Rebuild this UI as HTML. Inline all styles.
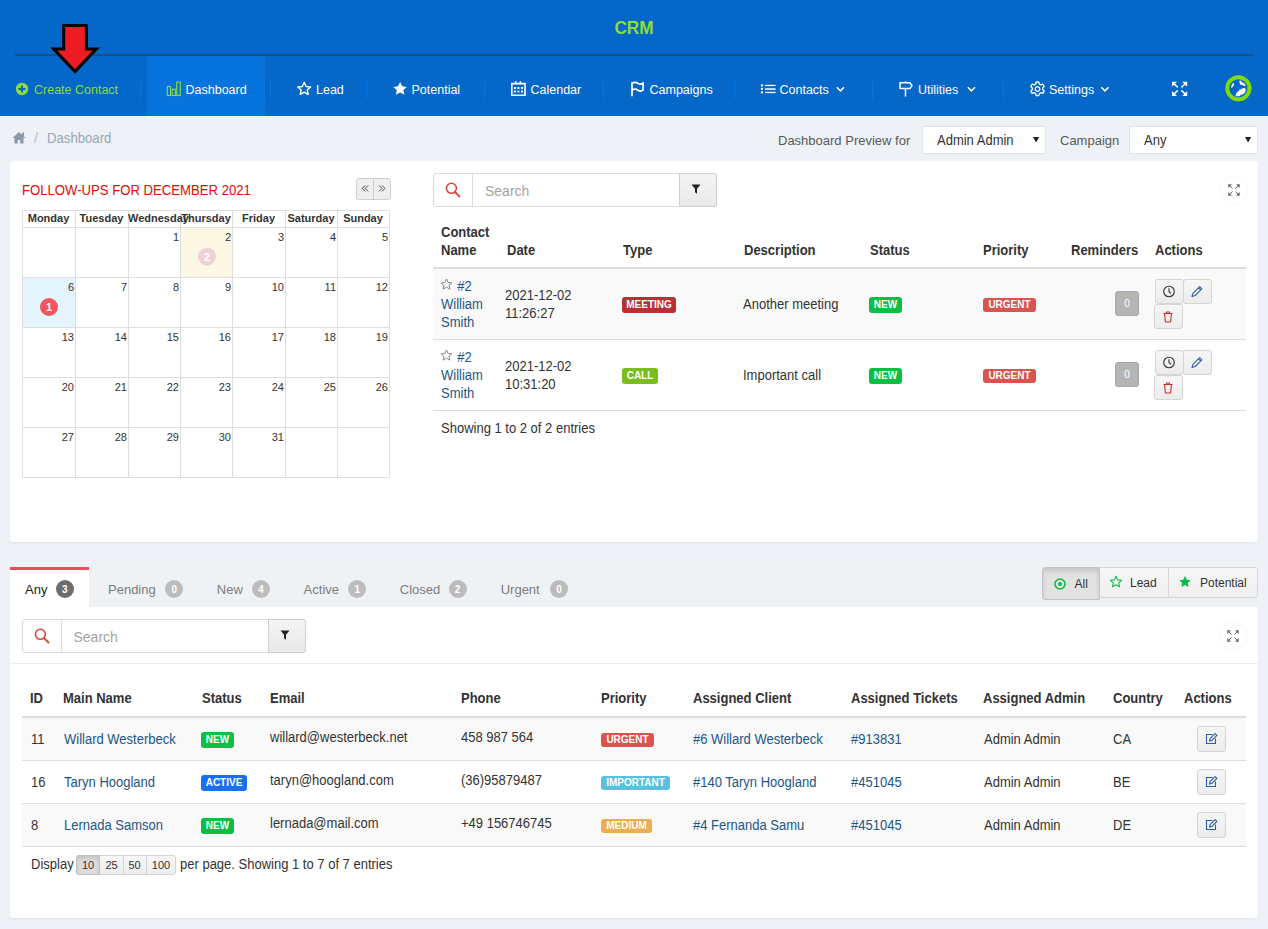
<!DOCTYPE html>
<html><head><meta charset="utf-8">
<style>
*{box-sizing:border-box;margin:0;padding:0}
html,body{width:1268px;height:929px;overflow:hidden}
body{background:#eef1f5;font-family:"Liberation Sans",sans-serif;font-size:13px;color:#333;position:relative}
.abs{position:absolute}
#hdr{position:absolute;left:0;top:0;width:1268px;height:116px;background:#0567c8}
#crm{position:absolute;left:0;top:18px;width:1268px;text-align:center;transform:scaleX(0.955);transform-origin:634px 0;color:#8ddc3a;font-weight:bold;font-size:18px;line-height:20px}
#hline{position:absolute;left:15px;top:54px;width:1238px;height:2px;background:#1d4f80}
.nav{position:absolute;top:60px;height:60px;color:#fff;font-size:13px;line-height:60px;white-space:nowrap}
.nav svg{position:absolute}
.sep{position:absolute;top:81px;width:1px;height:18px;background:#1775d0}
#active{position:absolute;left:147px;top:56px;width:118px;height:60px;background:#0773dc}
.bc{position:absolute;top:130px;font-size:14px;color:#98a6b5;line-height:16px}
.lbl{position:absolute;top:132px;font-size:13px;color:#555;line-height:16px}
.sel{position:absolute;top:126px;height:28px;background:#fff;border:1px solid #e2e5ea;font-size:14px;color:#333;line-height:27px;padding-left:14px}
.sel i{position:absolute;right:7px;top:0;font-style:normal;font-size:10px}
.panel{position:absolute;background:#fff;border-radius:3px;box-shadow:0 1px 2px rgba(0,0,0,.06)}

.t{position:absolute;white-space:nowrap;line-height:18px}
.lnk{color:#22568a}
.th{position:absolute;white-space:nowrap;font-weight:bold;line-height:18px;color:#333}
.badge{position:absolute;color:#fff;font-weight:bold;font-size:10px;line-height:16px;height:16px;border-radius:3px;text-align:center}
.btn{position:absolute;background:linear-gradient(#f6f6f6,#ececec);border:1px solid #d4d4d4;border-radius:3px}
.srch{position:absolute;height:34px;border:1px solid #dcdcdc;border-radius:3px;background:#fff}
</style></head><body>
<div id="hdr"></div>
<div id="crm">CRM</div>
<div id="hline"></div>
<div id="active"></div>


<!-- BREADCRUMB -->
<svg class="abs" style="left:12px;top:131px" width="14" height="13" viewBox="0 0 14 13">
 <path d="M7 1L0.5 7h2v5.5h3.3V9h2.4v3.5h3.3V7h2z" fill="#8a9aa8"/><rect x="10" y="1.5" width="2" height="3.5" fill="#8a9aa8"/>
</svg>
<div class="abs" style="left:34px;top:130px;font-size:14px;line-height:16px;color:#b4c0cc">/</div>
<div class="abs" style="left:47px;top:130px;font-size:14px;line-height:16px;color:#98a6b5;transform:scaleX(0.94);transform-origin:0 0">Dashboard</div>
<div class="abs" style="left:778px;top:133px;font-size:13px;line-height:16px;color:#5a5a5a">Dashboard Preview for</div>
<div class="sel" style="left:922px;width:124px"><span style="display:inline-block;transform:scaleX(.9286);transform-origin:0 0">Admin Admin</span><svg style="position:absolute;left:110px;top:10px" width="7" height="6" viewBox="0 0 7 6"><path d="M0 0h6.2L3.1 5.6z" fill="#222"/></svg></div>
<div class="abs" style="left:1060px;top:133px;font-size:13px;line-height:16px;color:#5a5a5a">Campaign</div>
<div class="sel" style="left:1129px;width:129px"><span style="display:inline-block;transform:scaleX(.9286);transform-origin:0 0">Any</span><svg style="position:absolute;left:115px;top:10px" width="7" height="6" viewBox="0 0 7 6"><path d="M0 0h6.2L3.1 5.6z" fill="#222"/></svg></div>
<!-- PANELS -->
<div class="panel" style="left:10px;top:161px;width:1248px;height:381px"></div>
<div class="abs" style="left:89px;top:567px;width:1169px;height:40px;background:#eff2f5"></div>
<div class="panel" style="left:10px;top:607px;width:1248px;height:311px;border-radius:0 0 3px 3px"></div>
<div class="abs" style="left:10px;top:567px;width:79px;height:41px;background:#fff;border-top:3px solid #f04b5b"></div>
<!-- CALENDAR -->
<div class="abs" style="left:22px;top:182px;font-size:14px;line-height:16px;color:#e00b0b;white-space:nowrap;transform:scaleX(0.938);transform-origin:0 0">FOLLOW-UPS FOR DECEMBER 2021</div>
<div class="abs" style="left:356px;top:178px;width:35px;height:22px;border:1px solid #cfcfcf;border-radius:3px;background:#efefef"></div>
<div class="abs" style="left:373px;top:178px;width:1px;height:22px;background:#cfcfcf"></div>
<svg class="abs" style="left:356px;top:178px" width="36" height="22" viewBox="356 178 36 22"><path d="M365.2 185.4l-3 3 3 3M368.2 185.4l-3 3 3 3M379 185.4l3 3-3 3M382 185.4l3 3-3 3" fill="none" stroke="#444" stroke-width="0.95"/></svg>

<div class="abs" style="left:180px;top:227px;width:52px;height:50px;background:#fcf8e3"></div>
<div class="abs" style="left:22px;top:277px;width:53px;height:50px;background:#e3f4fc"></div>
<svg class="abs" style="left:0;top:0" width="400" height="490"><g fill="#dedede"><rect x="22" y="210" width="1" height="268"/><rect x="75" y="210" width="1" height="268"/><rect x="128" y="210" width="1" height="268"/><rect x="180" y="210" width="1" height="268"/><rect x="232" y="210" width="1" height="268"/><rect x="285" y="210" width="1" height="268"/><rect x="337" y="210" width="1" height="268"/><rect x="389" y="210" width="1" height="268"/><rect x="22" y="210" width="368" height="1"/><rect x="22" y="227" width="368" height="1"/><rect x="22" y="277" width="368" height="1"/><rect x="22" y="327" width="368" height="1"/><rect x="22" y="377" width="368" height="1"/><rect x="22" y="427" width="368" height="1"/><rect x="22" y="477" width="368" height="1"/></g><circle cx="49" cy="307" r="9" fill="#f05560"/><circle cx="207" cy="256.7" r="9" fill="#efd1d7"/></svg>
<div class="abs" style="left:22px;top:212px;width:53px;text-align:center;font-weight:bold;font-size:11px;line-height:12px;color:#333;white-space:nowrap">Monday</div>
<div class="abs" style="left:75px;top:212px;width:53px;text-align:center;font-weight:bold;font-size:11px;line-height:12px;color:#333;white-space:nowrap">Tuesday</div>
<div class="abs" style="left:128px;top:212px;width:52px;text-align:center;font-weight:bold;font-size:11px;line-height:12px;color:#333;white-space:nowrap">Wednesday</div>
<div class="abs" style="left:180px;top:212px;width:52px;text-align:center;font-weight:bold;font-size:11px;line-height:12px;color:#333;white-space:nowrap">Thursday</div>
<div class="abs" style="left:232px;top:212px;width:53px;text-align:center;font-weight:bold;font-size:11px;line-height:12px;color:#333;white-space:nowrap">Friday</div>
<div class="abs" style="left:285px;top:212px;width:52px;text-align:center;font-weight:bold;font-size:11px;line-height:12px;color:#333;white-space:nowrap">Saturday</div>
<div class="abs" style="left:337px;top:212px;width:52px;text-align:center;font-weight:bold;font-size:11px;line-height:12px;color:#333;white-space:nowrap">Sunday</div>
<div class="abs" style="right:1089px;top:231px;font-size:11px;line-height:12px;color:#333">1</div>
<div class="abs" style="right:1037px;top:231px;font-size:11px;line-height:12px;color:#333">2</div>
<div class="abs" style="right:984px;top:231px;font-size:11px;line-height:12px;color:#333">3</div>
<div class="abs" style="right:932px;top:231px;font-size:11px;line-height:12px;color:#333">4</div>
<div class="abs" style="right:880px;top:231px;font-size:11px;line-height:12px;color:#333">5</div>
<div class="abs" style="right:1194px;top:281px;font-size:11px;line-height:12px;color:#333">6</div>
<div class="abs" style="right:1141px;top:281px;font-size:11px;line-height:12px;color:#333">7</div>
<div class="abs" style="right:1089px;top:281px;font-size:11px;line-height:12px;color:#333">8</div>
<div class="abs" style="right:1037px;top:281px;font-size:11px;line-height:12px;color:#333">9</div>
<div class="abs" style="right:984px;top:281px;font-size:11px;line-height:12px;color:#333">10</div>
<div class="abs" style="right:932px;top:281px;font-size:11px;line-height:12px;color:#333">11</div>
<div class="abs" style="right:880px;top:281px;font-size:11px;line-height:12px;color:#333">12</div>
<div class="abs" style="right:1194px;top:331px;font-size:11px;line-height:12px;color:#333">13</div>
<div class="abs" style="right:1141px;top:331px;font-size:11px;line-height:12px;color:#333">14</div>
<div class="abs" style="right:1089px;top:331px;font-size:11px;line-height:12px;color:#333">15</div>
<div class="abs" style="right:1037px;top:331px;font-size:11px;line-height:12px;color:#333">16</div>
<div class="abs" style="right:984px;top:331px;font-size:11px;line-height:12px;color:#333">17</div>
<div class="abs" style="right:932px;top:331px;font-size:11px;line-height:12px;color:#333">18</div>
<div class="abs" style="right:880px;top:331px;font-size:11px;line-height:12px;color:#333">19</div>
<div class="abs" style="right:1194px;top:381px;font-size:11px;line-height:12px;color:#333">20</div>
<div class="abs" style="right:1141px;top:381px;font-size:11px;line-height:12px;color:#333">21</div>
<div class="abs" style="right:1089px;top:381px;font-size:11px;line-height:12px;color:#333">22</div>
<div class="abs" style="right:1037px;top:381px;font-size:11px;line-height:12px;color:#333">23</div>
<div class="abs" style="right:984px;top:381px;font-size:11px;line-height:12px;color:#333">24</div>
<div class="abs" style="right:932px;top:381px;font-size:11px;line-height:12px;color:#333">25</div>
<div class="abs" style="right:880px;top:381px;font-size:11px;line-height:12px;color:#333">26</div>
<div class="abs" style="right:1194px;top:431px;font-size:11px;line-height:12px;color:#333">27</div>
<div class="abs" style="right:1141px;top:431px;font-size:11px;line-height:12px;color:#333">28</div>
<div class="abs" style="right:1089px;top:431px;font-size:11px;line-height:12px;color:#333">29</div>
<div class="abs" style="right:1037px;top:431px;font-size:11px;line-height:12px;color:#333">30</div>
<div class="abs" style="right:984px;top:431px;font-size:11px;line-height:12px;color:#333">31</div>
<div class="abs" style="left:40px;top:301px;width:18px;text-align:center;font-size:11px;font-weight:bold;line-height:12px;color:#fff">1</div>
<div class="abs" style="left:198px;top:251px;width:18px;text-align:center;font-size:11px;font-weight:bold;line-height:12px;color:#fff">2</div>
<!-- PANEL1 RIGHT -->
<div class="srch" style="left:433px;top:173px;width:284px"></div>
<div class="abs" style="left:472px;top:173px;width:1px;height:34px;background:#dcdcdc"></div>
<div class="abs" style="left:679px;top:173px;width:38px;height:34px;border:1px solid #d0d0d0;border-radius:0 3px 3px 0;background:linear-gradient(#f4f4f4,#e9e9e9)"></div>
<svg class="abs" style="left:443px;top:180px" width="20" height="20" viewBox="0 0 20 20"><circle cx="8.4" cy="8.3" r="5" fill="none" stroke="#d9473a" stroke-width="1.6"/><path d="M12 12l4.5 4.5" stroke="#d9473a" stroke-width="1.8" stroke-linecap="round"/></svg>
<div class="t" style="left:485px;top:182px;font-size:14px;color:#a3a3a3">Search</div>
<svg class="abs" style="left:690px;top:183px" width="12" height="12" viewBox="0 0 12 12"><path d="M1.5 1.5h9l-3.5 4.2v5l-2-1.5v-3.5z" fill="#222"/></svg>
<svg class="abs" style="left:1219px;top:176px" width="30" height="30" viewBox="0 0 30 30"><circle cx="15" cy="14" r="14" fill="#fff" stroke="#f9f9f9"/><g fill="#666"><path d="M9.3 8.3h3.6l-3.6 3.6zM20.7 8.3h-3.6l3.6 3.6zM9.3 19.7h3.6l-3.6-3.6zM20.7 19.7h-3.6l3.6-3.6z"/></g><g fill="none" stroke="#666" stroke-width="1"><path d="M10.5 9.5l3 3M19.5 9.5l-3 3M10.5 18.5l3-3M19.5 18.5l-3-3"/></g></svg>
<div class="th" style="left:441px;top:223px;font-size:14px;transform:scaleX(.9286);transform-origin:0 0">Contact<br>Name</div>
<div class="th" style="left:506.5px;top:241px;font-size:14px;transform:scaleX(.9286);transform-origin:0 0">Date</div>
<div class="th" style="left:622.5px;top:241px;font-size:14px;transform:scaleX(.9286);transform-origin:0 0">Type</div>
<div class="th" style="left:743.5px;top:241px;font-size:14px;transform:scaleX(.9286);transform-origin:0 0">Description</div>
<div class="th" style="left:870px;top:241px;font-size:14px;transform:scaleX(.9286);transform-origin:0 0">Status</div>
<div class="th" style="left:983px;top:241px;font-size:14px;transform:scaleX(.9286);transform-origin:0 0">Priority</div>
<div class="th" style="left:1071px;top:241px;font-size:14px;transform:scaleX(.9286);transform-origin:0 0">Reminders</div>
<div class="th" style="left:1155px;top:241px;font-size:14px;transform:scaleX(.9286);transform-origin:0 0">Actions</div>
<div class="abs" style="left:433px;top:267px;width:813px;height:2px;background:#ddd"></div>
<div class="abs" style="left:433px;top:269px;width:813px;height:70px;background:#f9f9f9"></div>
<div class="abs" style="left:433px;top:339px;width:813px;height:1px;background:#ddd"></div>
<div class="abs" style="left:433px;top:410px;width:813px;height:1px;background:#ddd"></div>
<svg class="abs" style="left:440px;top:278px" width="13" height="13" viewBox="0 0 13 13"><path d="M6.5 1l1.6 3.5 3.8.4-2.9 2.5.9 3.8-3.4-2-3.4 2 .9-3.8L1.1 4.9l3.8-.4z" fill="none" stroke="#888" stroke-width="1" stroke-linejoin="round"/></svg>
<div class="t lnk" style="left:441px;top:277px;font-size:14px;transform:scaleX(.9286);transform-origin:0 0"><span style="padding-left:17.5px">#2</span><br>William<br>Smith</div>
<div class="t" style="left:505px;top:286px;font-size:14px;transform:scaleX(.9286);transform-origin:0 0;color:#333">2021-12-02<br>11:26:27</div>
<div class="badge" style="left:622px;top:297px;width:54px;background:#b92f33">MEETING</div>
<div class="t" style="left:743px;top:295px;font-size:14px;transform:scaleX(.9286);transform-origin:0 0;color:#333">Another meeting</div>
<div class="badge" style="left:869px;top:297px;width:33px;background:#0bbf45">NEW</div>
<div class="badge" style="left:983px;top:298px;width:53px;height:14px;line-height:14px;background:#d9534f">URGENT</div>
<div class="abs" style="left:1115px;top:291px;width:24px;height:25px;background:#b5b5b5;border:1px solid #a8a8a8;border-radius:3px;color:#fff;font-size:10px;line-height:23px;text-align:center">0</div>
<div class="btn" style="left:1155px;top:279px;width:29px;height:25px"></div>
<div class="btn" style="left:1183px;top:279px;width:29px;height:25px"></div>
<div class="btn" style="left:1154px;top:304px;width:29px;height:25px"></div>
<svg class="abs" style="left:1161px;top:284px" width="16" height="16" viewBox="0 0 16 16"><circle cx="8" cy="7.5" r="5.3" fill="none" stroke="#333" stroke-width="1.1"/><path d="M8 4.3v3.4l2 1.6" fill="none" stroke="#333" stroke-width="1.1"/></svg>
<svg class="abs" style="left:1189px;top:284px" width="16" height="16" viewBox="0 0 16 16"><path d="M3 12.5l1-3.2 6.6-6.6 2.2 2.2-6.6 6.6zM9.5 3.8l2.2 2.2" fill="none" stroke="#2f5ea8" stroke-width="1.1" stroke-linejoin="round"/></svg>
<svg class="abs" style="left:1160px;top:309px" width="16" height="16" viewBox="0 0 16 16"><path d="M4.5 4.5l.9 8.5h5.2l.9-8.5M3.5 4.5h9M6.5 4.5V3h3v1.5" fill="none" stroke="#c9302c" stroke-width="1.1" stroke-linejoin="round"/></svg>
<svg class="abs" style="left:440px;top:349px" width="13" height="13" viewBox="0 0 13 13"><path d="M6.5 1l1.6 3.5 3.8.4-2.9 2.5.9 3.8-3.4-2-3.4 2 .9-3.8L1.1 4.9l3.8-.4z" fill="none" stroke="#888" stroke-width="1" stroke-linejoin="round"/></svg>
<div class="t lnk" style="left:441px;top:348px;font-size:14px;transform:scaleX(.9286);transform-origin:0 0"><span style="padding-left:17.5px">#2</span><br>William<br>Smith</div>
<div class="t" style="left:505px;top:357px;font-size:14px;transform:scaleX(.9286);transform-origin:0 0;color:#333">2021-12-02<br>10:31:20</div>
<div class="badge" style="left:622px;top:368px;width:36px;background:#7cbd1e">CALL</div>
<div class="t" style="left:743px;top:366px;font-size:14px;transform:scaleX(.9286);transform-origin:0 0;color:#333">Important call</div>
<div class="badge" style="left:869px;top:368px;width:33px;background:#0bbf45">NEW</div>
<div class="badge" style="left:983px;top:369px;width:53px;height:14px;line-height:14px;background:#d9534f">URGENT</div>
<div class="abs" style="left:1115px;top:362px;width:24px;height:25px;background:#b5b5b5;border:1px solid #a8a8a8;border-radius:3px;color:#fff;font-size:10px;line-height:23px;text-align:center">0</div>
<div class="btn" style="left:1155px;top:350px;width:29px;height:25px"></div>
<div class="btn" style="left:1183px;top:350px;width:29px;height:25px"></div>
<div class="btn" style="left:1154px;top:375px;width:29px;height:25px"></div>
<svg class="abs" style="left:1161px;top:355px" width="16" height="16" viewBox="0 0 16 16"><circle cx="8" cy="7.5" r="5.3" fill="none" stroke="#333" stroke-width="1.1"/><path d="M8 4.3v3.4l2 1.6" fill="none" stroke="#333" stroke-width="1.1"/></svg>
<svg class="abs" style="left:1189px;top:355px" width="16" height="16" viewBox="0 0 16 16"><path d="M3 12.5l1-3.2 6.6-6.6 2.2 2.2-6.6 6.6zM9.5 3.8l2.2 2.2" fill="none" stroke="#2f5ea8" stroke-width="1.1" stroke-linejoin="round"/></svg>
<svg class="abs" style="left:1160px;top:380px" width="16" height="16" viewBox="0 0 16 16"><path d="M4.5 4.5l.9 8.5h5.2l.9-8.5M3.5 4.5h9M6.5 4.5V3h3v1.5" fill="none" stroke="#c9302c" stroke-width="1.1" stroke-linejoin="round"/></svg>
<div class="t" style="left:441px;top:419px;font-size:14px;transform:scaleX(.9286);transform-origin:0 0;color:#333">Showing 1 to 2 of 2 entries</div>
<!-- PANEL2 -->
<div class="t" style="left:25px;top:581px;font-size:13px;color:#222">Any</div>
<div class="abs" style="left:55.8px;top:580px;width:18px;height:18px;border-radius:9px;background:#6d6d6d;color:#fff;font-size:10px;font-weight:bold;line-height:19px;text-align:center">3</div>
<div class="t" style="left:108px;top:581px;font-size:13px;color:#7d7d7d">Pending</div>
<div class="abs" style="left:165.4px;top:580px;width:18px;height:18px;border-radius:9px;background:#bcbcbc;color:#fff;font-size:10px;font-weight:bold;line-height:19px;text-align:center">0</div>
<div class="t" style="left:216.8px;top:581px;font-size:13px;color:#7d7d7d">New</div>
<div class="abs" style="left:252px;top:580px;width:18px;height:18px;border-radius:9px;background:#bcbcbc;color:#fff;font-size:10px;font-weight:bold;line-height:19px;text-align:center">4</div>
<div class="t" style="left:303.6px;top:581px;font-size:13px;color:#7d7d7d">Active</div>
<div class="abs" style="left:348.2px;top:580px;width:18px;height:18px;border-radius:9px;background:#bcbcbc;color:#fff;font-size:10px;font-weight:bold;line-height:19px;text-align:center">1</div>
<div class="t" style="left:399.8px;top:581px;font-size:13px;color:#7d7d7d">Closed</div>
<div class="abs" style="left:448.5px;top:580px;width:18px;height:18px;border-radius:9px;background:#bcbcbc;color:#fff;font-size:10px;font-weight:bold;line-height:19px;text-align:center">2</div>
<div class="t" style="left:500.7px;top:581px;font-size:13px;color:#7d7d7d">Urgent</div>
<div class="abs" style="left:550px;top:580px;width:18px;height:18px;border-radius:9px;background:#bcbcbc;color:#fff;font-size:10px;font-weight:bold;line-height:19px;text-align:center">0</div>
<div class="abs" style="left:1099px;top:567px;width:159px;height:31px;border:1px solid #d6d6d6;border-radius:0 3px 3px 0;background:linear-gradient(#f7f7f7,#efefef)"></div>
<div class="abs" style="left:1168px;top:568px;width:1px;height:29px;background:#d6d6d6"></div>
<div class="abs" style="left:1042px;top:567px;width:58px;height:33px;border:1px solid #c4c4c4;border-radius:3px 0 0 3px;background:#e2e2e2;box-shadow:inset 0 3px 5px rgba(0,0,0,.13)"></div>
<svg class="abs" style="left:1052px;top:576px" width="16" height="16" viewBox="0 0 16 16"><circle cx="8" cy="8" r="5" fill="none" stroke="#11b84a" stroke-width="1.6"/><circle cx="8" cy="8" r="2" fill="#11b84a"/></svg>
<div class="t" style="left:1074.5px;top:575px;font-size:12px;color:#333">All</div>
<svg class="abs" style="left:1109px;top:575px" width="14" height="14" viewBox="0 0 14 14"><path d="M7 1.3l1.7 3.6 3.9.4-2.9 2.6.8 3.9L7 9.8l-3.5 2 .8-3.9-2.9-2.6 3.9-.4z" fill="none" stroke="#11b84a" stroke-width="1.1" stroke-linejoin="round"/></svg>
<div class="t" style="left:1130px;top:574px;font-size:12px;color:#333">Lead</div>
<svg class="abs" style="left:1178px;top:575px" width="14" height="14" viewBox="0 0 14 14"><path d="M7 1l1.8 3.7 4 .5-3 2.8.8 4L7 10l-3.6 2 .8-4-3-2.8 4-.5z" fill="#11b84a"/></svg>
<div class="t" style="left:1200px;top:574px;font-size:12px;color:#333">Potential</div>
<div class="srch" style="left:22px;top:619px;width:284px;height:34px"></div>
<div class="abs" style="left:61px;top:619px;width:1px;height:34px;background:#dcdcdc"></div>
<div class="abs" style="left:268px;top:619px;width:38px;height:34px;border:1px solid #d0d0d0;border-radius:0 3px 3px 0;background:linear-gradient(#f4f4f4,#e9e9e9)"></div>
<svg class="abs" style="left:32px;top:626px" width="20" height="20" viewBox="0 0 20 20"><circle cx="8.4" cy="8.3" r="5" fill="none" stroke="#d9473a" stroke-width="1.6"/><path d="M12 12l4.5 4.5" stroke="#d9473a" stroke-width="1.8" stroke-linecap="round"/></svg>
<div class="t" style="left:73.5px;top:628px;font-size:14px;color:#a3a3a3">Search</div>
<svg class="abs" style="left:279px;top:629px" width="12" height="12" viewBox="0 0 12 12"><path d="M1.5 1.5h9l-3.5 4.2v5l-2-1.5v-3.5z" fill="#222"/></svg>
<svg class="abs" style="left:1218px;top:622px" width="30" height="30" viewBox="0 0 30 30"><circle cx="15" cy="14" r="14" fill="#fff" stroke="#f9f9f9"/><g fill="#666"><path d="M9.3 8.3h3.6l-3.6 3.6zM20.7 8.3h-3.6l3.6 3.6zM9.3 19.7h3.6l-3.6-3.6zM20.7 19.7h-3.6l3.6-3.6z"/></g><g fill="none" stroke="#666" stroke-width="1"><path d="M10.5 9.5l3 3M19.5 9.5l-3 3M10.5 18.5l3-3M19.5 18.5l-3-3"/></g></svg>
<div class="abs" style="left:10px;top:663px;width:1248px;height:1px;background:#eceef0"></div>
<div class="th" style="left:30px;top:689px;font-size:14px;transform:scaleX(.9286);transform-origin:0 0">ID</div>
<div class="th" style="left:63.3px;top:689px;font-size:14px;transform:scaleX(.9286);transform-origin:0 0">Main Name</div>
<div class="th" style="left:202.4px;top:689px;font-size:14px;transform:scaleX(.9286);transform-origin:0 0">Status</div>
<div class="th" style="left:270.4px;top:689px;font-size:14px;transform:scaleX(.9286);transform-origin:0 0">Email</div>
<div class="th" style="left:461.2px;top:689px;font-size:14px;transform:scaleX(.9286);transform-origin:0 0">Phone</div>
<div class="th" style="left:601.2px;top:689px;font-size:14px;transform:scaleX(.9286);transform-origin:0 0">Priority</div>
<div class="th" style="left:693.1px;top:689px;font-size:14px;transform:scaleX(.9286);transform-origin:0 0">Assigned Client</div>
<div class="th" style="left:850.8px;top:689px;font-size:14px;transform:scaleX(.9286);transform-origin:0 0">Assigned Tickets</div>
<div class="th" style="left:983.3px;top:689px;font-size:14px;transform:scaleX(.9286);transform-origin:0 0">Assigned Admin</div>
<div class="th" style="left:1113.2px;top:689px;font-size:14px;transform:scaleX(.9286);transform-origin:0 0">Country</div>
<div class="th" style="left:1183.9px;top:689px;font-size:14px;transform:scaleX(.9286);transform-origin:0 0">Actions</div>
<div class="abs" style="left:22px;top:716px;width:1224px;height:2px;background:#ddd"></div>
<div class="abs" style="left:22px;top:718px;width:1224px;height:42px;background:#f9f9f9"></div>
<div class="abs" style="left:22px;top:760px;width:1224px;height:1px;background:#ddd"></div>
<div class="t" style="left:30.5px;top:730px;font-size:14px;transform:scaleX(.9286);transform-origin:0 0">11</div>
<div class="t lnk" style="left:63.5px;top:730px;font-size:14px;transform:scaleX(.9286);transform-origin:0 0">Willard Westerbeck</div>
<div class="badge" style="left:201px;top:732px;width:33px;background:#0bbf45">NEW</div>
<div class="t" style="left:270px;top:728px;font-size:14px;transform:scaleX(.9286);transform-origin:0 0">willard@westerbeck.net</div>
<div class="t" style="left:461px;top:728px;font-size:14px;transform:scaleX(.9286);transform-origin:0 0">458 987 564</div>
<div class="badge" style="left:601px;top:733px;width:53px;height:14px;line-height:14px;background:#d9534f">URGENT</div>
<div class="t lnk" style="left:693px;top:730px;font-size:14px;transform:scaleX(.9286);transform-origin:0 0">#6 Willard Westerbeck</div>
<div class="t lnk" style="left:851px;top:730px;font-size:14px;transform:scaleX(.9286);transform-origin:0 0">#913831</div>
<div class="t" style="left:984px;top:730px;font-size:14px;transform:scaleX(.9286);transform-origin:0 0">Admin Admin</div>
<div class="t" style="left:1113px;top:730px;font-size:14px;transform:scaleX(.9286);transform-origin:0 0">CA</div>
<div class="btn" style="left:1197px;top:726px;width:29px;height:26px"></div>
<svg class="abs" style="left:1203px;top:731px" width="16" height="16" viewBox="0 0 16 16"><path d="M9.5 3.5H3.5v9h9v-5" fill="none" stroke="#2f5ea8" stroke-width="1.1"/><path d="M6.5 10l.6-2.4 5-5 1.8 1.8-5 5z" fill="none" stroke="#2f5ea8" stroke-width="1.1" stroke-linejoin="round"/></svg>
<div class="abs" style="left:22px;top:803px;width:1224px;height:1px;background:#ddd"></div>
<div class="t" style="left:30.5px;top:773px;font-size:14px;transform:scaleX(.9286);transform-origin:0 0">16</div>
<div class="t lnk" style="left:63.5px;top:773px;font-size:14px;transform:scaleX(.9286);transform-origin:0 0">Taryn Hoogland</div>
<div class="badge" style="left:201px;top:775px;width:46px;background:#1a6ef5">ACTIVE</div>
<div class="t" style="left:270px;top:771px;font-size:14px;transform:scaleX(.9286);transform-origin:0 0">taryn@hoogland.com</div>
<div class="t" style="left:461px;top:771px;font-size:14px;transform:scaleX(.9286);transform-origin:0 0">(36)95879487</div>
<div class="badge" style="left:601px;top:776px;width:69px;height:14px;line-height:14px;background:#5bc0de">IMPORTANT</div>
<div class="t lnk" style="left:693px;top:773px;font-size:14px;transform:scaleX(.9286);transform-origin:0 0">#140 Taryn Hoogland</div>
<div class="t lnk" style="left:851px;top:773px;font-size:14px;transform:scaleX(.9286);transform-origin:0 0">#451045</div>
<div class="t" style="left:984px;top:773px;font-size:14px;transform:scaleX(.9286);transform-origin:0 0">Admin Admin</div>
<div class="t" style="left:1113px;top:773px;font-size:14px;transform:scaleX(.9286);transform-origin:0 0">BE</div>
<div class="btn" style="left:1197px;top:769px;width:29px;height:26px"></div>
<svg class="abs" style="left:1203px;top:774px" width="16" height="16" viewBox="0 0 16 16"><path d="M9.5 3.5H3.5v9h9v-5" fill="none" stroke="#2f5ea8" stroke-width="1.1"/><path d="M6.5 10l.6-2.4 5-5 1.8 1.8-5 5z" fill="none" stroke="#2f5ea8" stroke-width="1.1" stroke-linejoin="round"/></svg>
<div class="abs" style="left:22px;top:804px;width:1224px;height:42px;background:#f9f9f9"></div>
<div class="abs" style="left:22px;top:846px;width:1224px;height:1px;background:#ddd"></div>
<div class="t" style="left:30.5px;top:816px;font-size:14px;transform:scaleX(.9286);transform-origin:0 0">8</div>
<div class="t lnk" style="left:63.5px;top:816px;font-size:14px;transform:scaleX(.9286);transform-origin:0 0">Lernada Samson</div>
<div class="badge" style="left:201px;top:818px;width:33px;background:#0bbf45">NEW</div>
<div class="t" style="left:270px;top:814px;font-size:14px;transform:scaleX(.9286);transform-origin:0 0">lernada@mail.com</div>
<div class="t" style="left:461px;top:814px;font-size:14px;transform:scaleX(.9286);transform-origin:0 0">+49 156746745</div>
<div class="badge" style="left:601px;top:819px;width:51px;height:14px;line-height:14px;background:#f0ad4e">MEDIUM</div>
<div class="t lnk" style="left:693px;top:816px;font-size:14px;transform:scaleX(.9286);transform-origin:0 0">#4 Fernanda Samu</div>
<div class="t lnk" style="left:851px;top:816px;font-size:14px;transform:scaleX(.9286);transform-origin:0 0">#451045</div>
<div class="t" style="left:984px;top:816px;font-size:14px;transform:scaleX(.9286);transform-origin:0 0">Admin Admin</div>
<div class="t" style="left:1113px;top:816px;font-size:14px;transform:scaleX(.9286);transform-origin:0 0">DE</div>
<div class="btn" style="left:1197px;top:812px;width:29px;height:26px"></div>
<svg class="abs" style="left:1203px;top:817px" width="16" height="16" viewBox="0 0 16 16"><path d="M9.5 3.5H3.5v9h9v-5" fill="none" stroke="#2f5ea8" stroke-width="1.1"/><path d="M6.5 10l.6-2.4 5-5 1.8 1.8-5 5z" fill="none" stroke="#2f5ea8" stroke-width="1.1" stroke-linejoin="round"/></svg>
<div class="t" style="left:30.5px;top:855px;font-size:14px;transform:scaleX(.9286);transform-origin:0 0">Display</div>
<div class="abs" style="left:76px;top:855px;width:100px;height:20px;border:1px solid #d4d4d4;border-radius:3px;background:linear-gradient(#f7f7f7,#ededed)"></div>
<div class="abs" style="left:76px;top:855px;width:24px;height:20px;border:1px solid #c0c0c0;border-radius:3px 0 0 3px;background:#dcdcdc;box-shadow:inset 0 2px 4px rgba(0,0,0,.12)"></div>
<div class="abs" style="left:123px;top:856px;width:1px;height:18px;background:#d4d4d4"></div>
<div class="abs" style="left:146px;top:856px;width:1px;height:18px;background:#d4d4d4"></div>
<div class="t" style="left:76px;top:856px;width:24px;text-align:center;font-size:11px;color:#333">10</div>
<div class="t" style="left:100px;top:856px;width:23px;text-align:center;font-size:11px;color:#333">25</div>
<div class="t" style="left:123px;top:856px;width:23px;text-align:center;font-size:11px;color:#333">50</div>
<div class="t" style="left:146px;top:856px;width:30px;text-align:center;font-size:11px;color:#333">100</div>
<div class="t" style="left:180px;top:855px;font-size:14px;transform:scaleX(.9286);transform-origin:0 0">per page. Showing 1 to 7 of 7 entries</div>
<!-- NAV -->
<svg class="abs" style="left:0;top:56px" width="1268" height="60" viewBox="0 56 1268 60">
 <g fill="#0775e0">
  <rect x="140" y="81" width="1" height="18"/><rect x="270" y="81" width="1" height="18"/><rect x="366" y="81" width="1" height="18"/>
  <rect x="484" y="81" width="1" height="18"/><rect x="603" y="81" width="1" height="18"/><rect x="734" y="81" width="1" height="18"/>
  <rect x="872" y="81" width="1" height="18"/><rect x="1003" y="81" width="1" height="18"/>
 </g>
 <!-- create contact icon -->
 <circle cx="22" cy="89" r="6.2" fill="#8ddc3a"/>
 <path d="M22 85.5v7M18.5 89h7" stroke="#0567c8" stroke-width="2"/>
 <!-- dashboard bars -->
 <g fill="none" stroke="#8ddc3a" stroke-width="1.1">
  <rect x="167.3" y="86.5" width="3.2" height="9"/>
  <rect x="172.2" y="89.3" width="3.2" height="6.2"/>
  <rect x="176.7" y="82.2" width="3.6" height="13.3"/>
 </g>
 <!-- lead star outline -->
 <path d="M304.2 82.3l1.9 4.2 4.5.5-3.4 3 1 4.5-4-2.3-4 2.3 1-4.5-3.4-3 4.5-.5z" fill="none" stroke="#fff" stroke-width="1.4" stroke-linejoin="round"/>
 <!-- potential star filled -->
 <path d="M400.1 82l2.1 4.3 4.7.6-3.5 3.2 1 4.7-4.3-2.4-4.2 2.4.9-4.7-3.5-3.2 4.7-.6z" fill="#fff"/>
 <!-- calendar -->
 <g fill="#fff">
  <path d="M511.8 83.6h13.2v11.7h-13.2z" fill="none" stroke="#fff" stroke-width="1.6"/>
  <rect x="515" y="81.3" width="1.6" height="3"/><rect x="519.6" y="81.3" width="1.6" height="3"/>
  <rect x="513.9" y="87" width="2" height="2"/><rect x="517.4" y="87" width="2" height="2"/><rect x="521" y="87" width="2" height="2"/>
  <rect x="513.9" y="90.5" width="2" height="2"/><rect x="517.4" y="90.5" width="2" height="2"/><rect x="521" y="90.5" width="2" height="2"/>
 </g>
 <!-- flag -->
 <path d="M632 96.2V82.3M632 83.2c2-1.2 4-1.2 6 .2s3.6 1 5.1-.5v7c-1.5 1.5-3.1 1.7-5.1.3s-4-1.4-6-.2" fill="none" stroke="#fff" stroke-width="1.7" stroke-linejoin="round"/>
 <!-- list -->
 <g fill="#fff">
  <rect x="760.8" y="84.3" width="2.3" height="2.3" rx="1"/><rect x="760.8" y="87.8" width="2.3" height="2.3" rx="1"/><rect x="760.8" y="91.3" width="2.3" height="2.3" rx="1"/>
  <rect x="765" y="84.8" width="10.6" height="1.3"/><rect x="765" y="88.3" width="10.6" height="1.5"/><rect x="765" y="91.8" width="10.6" height="1.3"/>
 </g>
 <!-- chevrons -->
 <g fill="none" stroke="#fff" stroke-width="1.5">
  <path d="M836.8 87.3l3.6 3.6 3.6-3.6"/>
  <path d="M967.8 87.3l3.6 3.6 3.6-3.6"/>
  <path d="M1101.3 87.3l3.6 3.6 3.6-3.6"/>
 </g>
 <!-- utilities signpost -->
 <path d="M905.5 96.5v-8M905.5 81.3v1.5M900 82.8h10l2 2.8-2 2.8h-10z" fill="none" stroke="#fff" stroke-width="1.5" stroke-linejoin="round"/>
 <!-- settings gear -->
 <g transform="translate(1037.5 89)">
  <path d="M-1.3 -7h2.6l.5 2 1.6.9 2-.7 1.3 2.3-1.5 1.4v1.8l1.5 1.4-1.3 2.3-2-.7-1.6.9-.5 2h-2.6l-.5-2-1.6-.9-2 .7-1.3-2.3 1.5-1.4v-1.8l-1.5-1.4 1.3-2.3 2 .7 1.6-.9z" fill="none" stroke="#fff" stroke-width="1.3" stroke-linejoin="round"/>
  <circle r="2.3" fill="none" stroke="#fff" stroke-width="1.3"/>
 </g>
 <!-- fullscreen -->
 <g fill="#fff">
  <path d="M1172 81.8h5l-5 5z M1187.2 81.8h-5l5 5z M1172 96h5l-5-5z M1187.2 96h-5l5-5z"/>
 </g>
 <g fill="none" stroke="#fff" stroke-width="1.5">
  <path d="M1174 83.8l3.8 3.6M1185.2 83.8l-3.8 3.6M1174 94l3.8-3.6M1185.2 94l-3.8-3.6"/>
 </g>
 <!-- avatar -->
 <circle cx="1238.4" cy="88.3" r="11.1" fill="#0567c8" stroke="#80dc00" stroke-width="4"/>
 <path d="M1233.6 82.8l.5 1.6-.9 1.8-1.5 1.7-.6-.9.6-1.7 1-1.9z" fill="#fff"/>
 <path d="M1239.5 80.6l1.6.2 1 1.4 2.1 1 1.6 2.4-1.4.5-2-1.2-1.9-.2-1-1.8z" fill="#fff"/>
 <path d="M1235.5 96.2l.6-2.6 1.3-1.8 1.4-.9.8-1.4 2-.6 1.6-.9 2.1.3.4 2.3-.9 2.4-2.4 1.5-1.5.2-1.3 1.6z" fill="#fff"/>
</svg>
<div class="nav" style="left:34px;color:#8ddc3a;font-size:12.5px">Create Contact</div>
<div class="nav" style="left:185.5px;font-size:12.5px">Dashboard</div>
<div class="nav" style="left:316px;font-size:12.5px">Lead</div>
<div class="nav" style="left:411.5px;font-size:12.5px">Potential</div>
<div class="nav" style="left:530.5px;font-size:12.5px">Calendar</div>
<div class="nav" style="left:649.5px;font-size:12.5px">Campaigns</div>
<div class="nav" style="left:779.5px;font-size:12.5px">Contacts</div>
<div class="nav" style="left:918px;font-size:12.5px">Utilities</div>
<div class="nav" style="left:1049px;font-size:12.5px">Settings</div>
<!-- arrow annotation -->
<svg class="abs" style="left:0;top:0;z-index:5" width="120" height="80" viewBox="0 0 120 80">
 <path d="M63.7 25.5h22.7v23.4h10l-21.4 22.6-21.4-22.6h10.1z" fill="#ed1c24" stroke="#000" stroke-width="3" stroke-linejoin="miter"/>
</svg>
</body></html>
